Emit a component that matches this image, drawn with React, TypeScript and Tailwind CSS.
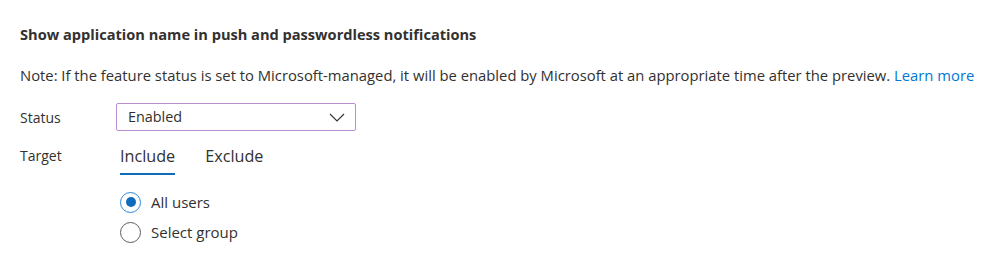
import { useState } from 'react';

const font = { fontFamily: '"Open Sans", "Noto Sans", sans-serif' };

const Radio = ({ checked, label }: { checked: boolean; label: string }) => (
  <label className="flex items-center gap-[10px] h-[30px] cursor-pointer">
    <span
      className={
        checked
          ? 'flex items-center justify-center w-[21px] h-[21px] rounded-full border border-[#2b88d8]'
          : 'flex items-center justify-center w-[21px] h-[21px] rounded-full border border-[#605e5c]'
      }
    >
      {checked && <span className="w-[10px] h-[10px] rounded-full bg-[#0f6cbd]" />}
    </span>
    <span className="text-[15px] text-[#323130]">{label}</span>
  </label>
);

export default function App() {
  const [tab, setTab] = useState<'include' | 'exclude'>('include');

  return (
    <div className="w-[1000px] h-[267px] bg-white pl-5 pt-[23px]" style={font}>
      {/* Heading */}
      <h2 className="text-[14.6px] font-bold text-[#323130] leading-[22px]">
        Show application name in push and passwordless notifications
      </h2>

      {/* Note */}
      <p className="mt-[19px] text-[14.8px] text-[#323130] leading-[22px] whitespace-nowrap">
        Note: If the feature status is set to Microsoft-managed, it will be enabled by Microsoft at an appropriate time
        after the preview. <a className="text-[#0078d4]" href="#">Learn more</a>
      </p>

      {/* Status row */}
      <div className="mt-[17px] flex items-center">
        <span className="w-[96px] text-[14px] text-[#323130] pt-[1px]">Status</span>
        <button className="flex items-center justify-between w-[240px] h-[28px] pl-[11px] pr-[10px] border border-[#b98fd0] rounded-[2px] bg-white">
          <span className="text-[14.4px] text-[#323130]">Enabled</span>
          <svg width="16" height="9" viewBox="0 0 16 9" fill="none">
            <path d="M1 1l7 7 7-7" stroke="#323130" strokeWidth="1.1" />
          </svg>
        </button>
      </div>

      {/* Target row */}
      <div className="mt-[6px] flex items-start">
        <span className="w-[100px] mt-[2px] text-[14px] text-[#323130] leading-[34px]">Target</span>
        <div className="flex flex-col">
          <div className="flex gap-[30px]">
            <button
              onClick={() => setTab('include')}
              className={
                tab === 'include'
                  ? 'h-[38px] pt-[2px] text-[16.2px] text-[#323130] border-b-2 border-[#0f6cbd] leading-[34px]'
                  : 'h-[38px] pt-[2px] text-[16.2px] text-[#323130] border-b-2 border-transparent leading-[34px]'
              }
            >
              Include
            </button>
            <button
              onClick={() => setTab('exclude')}
              className={
                tab === 'exclude'
                  ? 'h-[38px] pt-[2px] text-[16.2px] text-[#323130] border-b-2 border-[#0f6cbd] leading-[34px]'
                  : 'h-[38px] pt-[2px] text-[16.2px] text-[#323130] border-b-2 border-transparent leading-[34px]'
              }
            >
              Exclude
            </button>
          </div>
          <div className="mt-[12px] flex flex-col">
            <Radio checked label="All users" />
            <Radio checked={false} label="Select group" />
          </div>
        </div>
      </div>
    </div>
  );
}
